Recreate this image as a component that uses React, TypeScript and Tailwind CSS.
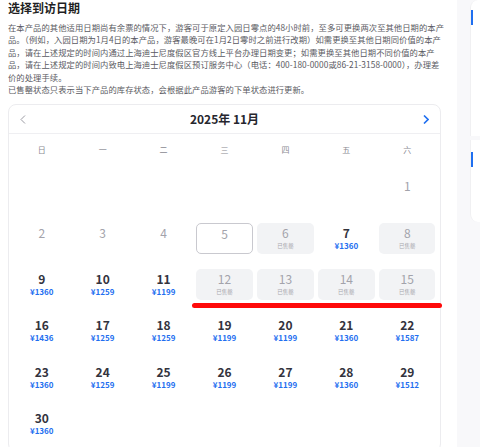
import React from "react"

type Day = {
    d?: number
    price?: string
    kind?: "past" | "sold" | "ok" | "picked"
}

// calendar data, november 2025
const rows: Day[][] = [
    [{}, {}, {}, {}, {}, {}, { d: 1, kind: "past" }],
    [
        { d: 2, kind: "past" }, { d: 3, kind: "past" }, { d: 4, kind: "past" },
        { d: 5, kind: "picked" }, { d: 6, kind: "sold" }, { d: 7, price: "1360", kind: "ok" },
        { d: 8, kind: "sold" },
    ],
    [
        { d: 9, price: "1360", kind: "ok" }, { d: 10, price: "1259", kind: "ok" },
        { d: 11, price: "1199", kind: "ok" }, { d: 12, kind: "sold" }, { d: 13, kind: "sold" },
        { d: 14, kind: "sold" }, { d: 15, kind: "sold" },
    ],
    [
        { d: 16, price: "1436", kind: "ok" }, { d: 17, price: "1259", kind: "ok" },
        { d: 18, price: "1259", kind: "ok" }, { d: 19, price: "1199", kind: "ok" },
        { d: 20, price: "1199", kind: "ok" }, { d: 21, price: "1360", kind: "ok" },
        { d: 22, price: "1587", kind: "ok" },
    ],
    [
        { d: 23, price: "1360", kind: "ok" }, { d: 24, price: "1259", kind: "ok" },
        { d: 25, price: "1199", kind: "ok" }, { d: 26, price: "1199", kind: "ok" },
        { d: 27, price: "1199", kind: "ok" }, { d: 28, price: "1360", kind: "ok" },
        { d: 29, price: "1512", kind: "ok" },
    ],
    [{ d: 30, price: "1360", kind: "ok" }, {}, {}, {}, {}, {}, {}],
]

const weekdays = ["日", "一", "二", "三", "四", "五", "六"]

// notice text, broken as on the page
const notice = [
    "在本产品的其他适用日期尚有余票的情况下，游客可于原定入园日零点的48小时前，至多可更换两次至其他日期的本产",
    "品。（例如，入园日期为1月4日的本产品，游客最晚可在1月2日零时之前进行改期）如需更换至其他日期同价值的本产",
    "品，请在上述规定的时间内通过上海迪士尼度假区官方线上平台办理日期变更；如需更换至其他日期不同价值的本产",
    "品，请在上述规定的时间内致电上海迪士尼度假区预订服务中心（电话：400-180-0000或86-21-3158-0000），办理差",
    "价的处理手续。",
    "已售罄状态只表示当下产品的库存状态，会根据此产品游客的下单状态进行更新。",
]

// single day cell
const Cell: React.FC<{ day: Day }> = ({ day }) => {
    if (!day.d) return <div className="h-[31px]" />

    const box =
        day.kind === "sold"
            ? "bg-[#f2f3f5]"
            : day.kind === "picked"
            ? "border border-[#c9c9cf] bg-white"
            : ""

    return (
        <div className={`flex flex-col items-center pt-[3px] h-[31px] rounded-[5px] ${box}`}>
            <div className={`text-[12px] leading-[14px] ${
                day.kind === "ok" ? "font-semibold text-[#33333d]" : "text-[#a3a3ab]"
            }`}>
                {day.d}
            </div>
            {day.kind === "ok" && (
                <div className="text-[8px] leading-[10px] font-bold text-[#1f6ff0] mt-[1px]">
                    ¥{day.price}
                </div>
            )}
            {day.kind === "sold" && (
                <div className="text-[5.5px] leading-[10px] text-[#a8a8ae] mt-[1px]">已售罄</div>
            )}
        </div>
    )
}

const App: React.FC = () => {
    return (
        <div className="relative flex h-[447px] w-[480px] overflow-hidden bg-white
        font-['Noto_Sans_CJK_SC','Noto_Sans',sans-serif]">
            {/* main column */}
            <div className="flex flex-col w-[457px] shrink-0 pl-2 pr-4">
                <div className="text-[12px] leading-[15px] font-bold text-[#1f1f24]">选择到访日期</div>
                <div className="mt-[6px] text-[8.3px] leading-[12.4px] tracking-[0.07px] text-[#5a5a62]">
                    {notice.map((line, i) => (
                        <div key={i} className="whitespace-nowrap">{line}</div>
                    ))}
                </div>

                {/* calendar card */}
                <div className="mt-[9px] border border-[#ececef] rounded-lg bg-white">
                    <div className="flex justify-between items-center h-[29px] px-[10px] border-b border-[#efeff2]">
                        <svg width="6" height="9" viewBox="0 0 6 9" className="ml-[1px]">
                            <polyline points="5,0.5 1,4.5 5,8.5" fill="none" stroke="#9a9aa2" strokeWidth="1" />
                        </svg>
                        <div className="text-[12px] font-bold text-[#26262e]">2025年 11月</div>
                        <svg width="6" height="9" viewBox="0 0 6 9" className="mr-[1px]">
                            <polyline points="1,0.5 5,4.5 1,8.5" fill="none" stroke="#1f6ff0" strokeWidth="1.6" />
                        </svg>
                    </div>
                    <div className="grid grid-cols-7 gap-x-[4.5px] px-[4.5px] h-[32px] items-center">
                        {weekdays.map((w) => (
                            <div key={w} className="text-center text-[8px] text-[#8a8a92]">{w}</div>
                        ))}
                    </div>
                    <div className="grid grid-cols-7 gap-x-[4.5px] gap-y-[15.3px] px-[4.5px] pt-[10px] pb-3">
                        {rows.flat().map((day, i) => (
                            <Cell key={i} day={day} />
                        ))}
                    </div>
                </div>
            </div>

            {/* right side panel */}
            <div className="flex-1 bg-[#f8f8fa] pl-[13px] flex flex-col gap-[4px]">
                <div className="h-[136px] bg-white rounded-tl-lg border-l border-[#f0f0f2] pt-[10px]">
                    <div className="w-[2px] h-[15px] bg-[#1f6ff0]" />
                </div>
                <div className="h-[82px] bg-white rounded-bl-lg border-l border-[#f0f0f2] pt-[12px]">
                    <div className="w-[2px] h-[15px] bg-[#1f6ff0]" />
                </div>
            </div>

            {/* red annotation */}
            <div className="absolute left-[192px] top-[303px] w-[250px] h-[5px] rounded-full bg-[#ff0a0a]" />
        </div>
    )
}

export default App
